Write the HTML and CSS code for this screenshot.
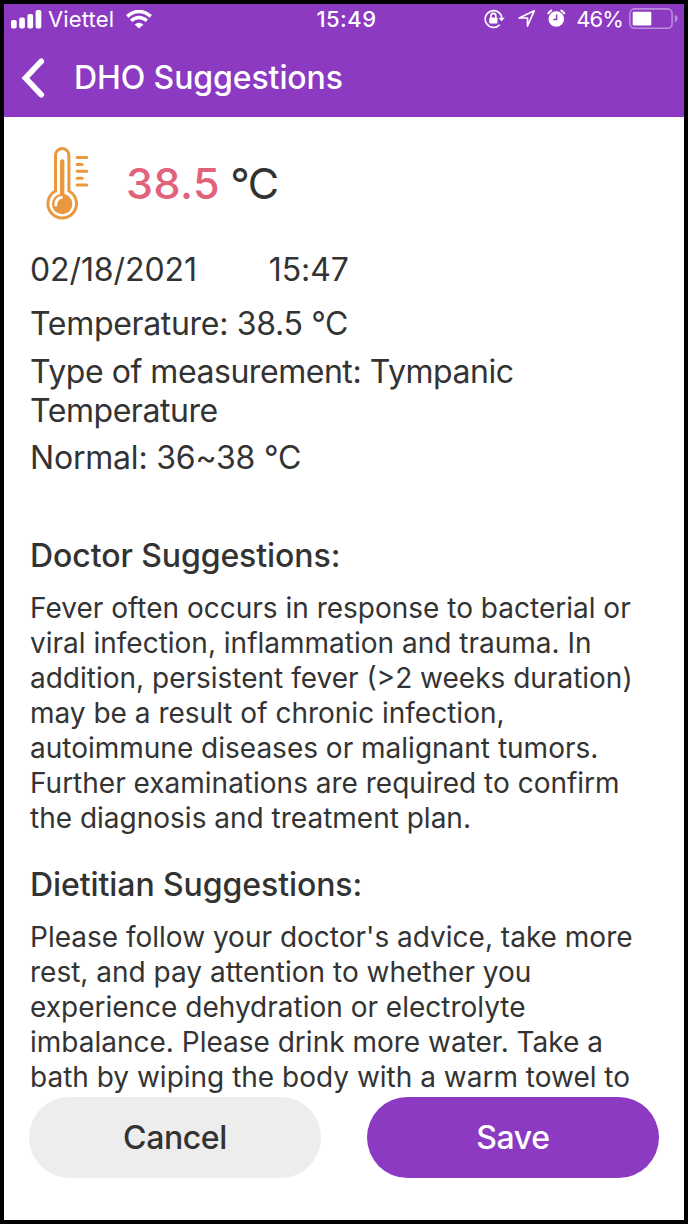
FILE: index.html
```html
<!DOCTYPE html>
<html lang="en">
<head>
  <meta charset="UTF-8">
  <title>DHO Suggestions</title>
  <link rel="stylesheet" href="styles.css">
</head>
<body>
  <div class="screen">
    <header>
      <!-- Status bar -->
      <div class="status">
        <div class="status-left">
          <svg class="signal" width="31" height="19" viewBox="0 0 31 19" fill="#fff">
            <rect x="0" y="10" width="5.7" height="8.5" rx="1.8"/>
            <rect x="8.2" y="7.5" width="5.7" height="11" rx="1.8"/>
            <rect x="16.4" y="4" width="5.7" height="14.5" rx="1.8"/>
            <rect x="24.6" y="0" width="5.7" height="18.5" rx="1.8"/>
          </svg>
          <span class="carrier">Viettel</span>
          <svg class="wifi" width="26" height="19" viewBox="0 0 26 19" fill="none" stroke="#fff">
            <path d="M1.2 6.4Q13-3.4 24.8 6.4" stroke-width="3.6"/>
            <path d="M5.1 10.8Q13 4.2 20.9 10.8" stroke-width="3.3"/>
            <path d="M8.6 14.5Q13 10.9 17.4 14.5L13 18.5Z" fill="#fff" stroke="none"/>
          </svg>
        </div>
        <span class="clock">15:49</span>
        <div class="status-right">
          <svg class="lock" width="22" height="20" viewBox="0 0 22 20" fill="none" stroke="#fff" stroke-width="1.6">
            <path d="M15.8 15.7A8.4 8.4 0 1 1 17.9 8.8"/>
            <path d="M14.4 8.8H20.8L17.6 12.2Z" fill="#fff" stroke="none"/>
            <rect x="5.3" y="8.5" width="8.2" height="6" rx="1" fill="#fff" stroke="none"/>
            <path d="M7 9V6.8a2.4 2.4 0 0 1 4.8 0V9"/>
          </svg>
          <svg class="location" width="18" height="19" viewBox="0 0 18 19" fill="none" stroke="#fff" stroke-width="1.7" stroke-linejoin="round">
            <path d="M1.2 9L16.2 1.8L9.5 17V9Z"/>
          </svg>
          <svg class="alarm" width="19" height="19" viewBox="0 0 19 19">
            <circle cx="9.3" cy="10" r="7.8" fill="#fff"/>
            <path d="M.9 5A9 9 0 0 1 5 1.2M13.6 1.2A9 9 0 0 1 17.7 5" fill="none" stroke="#fff" stroke-width="2"/>
            <path d="M9.6 5.4V10.6H6.3" fill="none" stroke="#8d3ac3" stroke-width="1.5"/>
          </svg>
          <span class="percent">46%</span>
          <svg class="battery" width="49" height="22" viewBox="0 0 49 22">
            <rect x=".9" y=".9" width="42.2" height="19.4" rx="4.5" fill="none" stroke="#bd8cde" stroke-width="1.6"/>
            <rect x="3.7" y="3.8" width="18.6" height="13.6" rx="1.2" fill="#fff"/>
            <path d="M45.8 7Q48.6 7.8 48.6 10.6T45.8 14.3Z" fill="#bd8cde"/>
          </svg>
        </div>
      </div>
      <div class="navbar">
        <svg class="back" width="24" height="40" viewBox="0 0 24 40" fill="none" stroke="#fff" stroke-width="5.6" stroke-linecap="round" stroke-linejoin="miter">
          <path d="M20.3 3.3L4.4 20L20.3 36.7"/>
        </svg>
        <h1>DHO Suggestions</h1>
      </div>
    </header>

    <main>
      <div class="reading">
        <svg class="thermometer" width="46" height="76" viewBox="0 0 46 76" fill="none" stroke="#ea983e">
          <path d="M10.5 46V10.2a6.7 6.7 0 0 1 13.4 0V46A14.3 14.3 0 1 1 10.5 46Z" stroke-width="3"/>
          <path d="M17.2 16.5V52" stroke-width="4.4" stroke-linecap="round"/>
          <circle cx="17.2" cy="59" r="10.2" fill="#ea983e" stroke="none"/>
          <path d="M10.8 60Q10.8 53.6 16.4 52.4" stroke="#fff" stroke-width="3" stroke-linecap="round"/>
          <path d="M32.1 12.5H41.7M32.1 19.4H37.2M32.1 26.3H41.7M32.1 33.2H37.2M32.1 39.9H41.7" stroke-width="3" stroke-linecap="round"/>
        </svg>
        <span class="value">38.5</span>
        <span class="unit">°C</span>
      </div>

      <div class="details">
        <div class="datetime"><span class="date">02/18/2021</span><span class="time">15:47</span></div>
        <p class="temp">Temperature: 38.5 °C</p>
        <p class="type">Type of measurement: Tympanic<br>Temperature</p>
        <p class="normal">Normal: 36~38 °C</p>
      </div>

      <section>
        <h2 class="doctor">Doctor Suggestions:</h2>
        <p>
          Fever often occurs in response to bacterial or<br>
          viral infection, inflammation and trauma. In<br>
          addition, persistent fever (&gt;2 weeks duration)<br>
          may be a result of chronic infection,<br>
          autoimmune diseases or malignant tumors.<br>
          Further examinations are required to confirm<br>
          the diagnosis and treatment plan.
        </p>
      </section>

      <section>
        <h2 class="dietitian">Dietitian Suggestions:</h2>
        <p>
          Please follow your doctor's advice, take more<br>
          rest, and pay attention to whether you<br>
          experience dehydration or electrolyte<br>
          imbalance. Please drink more water. Take a<br>
          bath by wiping the body with a warm towel to
        </p>
      </section>
    </main>

    <footer>
      <button class="cancel">Cancel</button>
      <button class="save">Save</button>
    </footer>
  </div>
</body>
</html>
```
FILE: styles.css
```css
* {
  box-sizing: border-box;
}
body {
  margin: 0;
  background: #000;
  font-family: Inter, "Liberation Sans", sans-serif;
  color: #333;
}
h1, h2, p {
  margin: 0;
  white-space: nowrap;
}
svg {
  display: block;
  flex-shrink: 0;
}
.screen {
  display: flex;
  flex-direction: column;
  width: 688px;
  height: 1224px;
  border: 4px solid #000;
  background: #fff;
  overflow: hidden;
}

/* Header */
header {
  height: 113px;
  flex-shrink: 0;
  background: #8d3ac3;
  color: #fff;
}
.status {
  display: grid;
  grid-template-columns: 1fr auto 1fr;
  align-items: center;
  height: 30px;
  padding: 0 6px 0 7px;
  font-size: 22px;
}
.status-left,
.status-right {
  display: flex;
  align-items: center;
}
.status-right {
  justify-content: flex-end;
}
.carrier {
  margin: 0 12px 0 6px;
  letter-spacing: 0.15px;
}
.clock {
  padding-left: 4px;
  font-weight: 500;
  letter-spacing: 0.5px;
}
.lock,
.location,
.alarm {
  margin-bottom: 1px;
}
.location {
  margin-right: 11px;
  margin-left: 12px;
}
.percent {
  margin: 0 6px 0 10px;
  letter-spacing: -0.9px;
}
.navbar {
  display: flex;
  align-items: center;
  height: 87px;
  padding: 0 0 0 17px;
}
h1 {
  margin-left: 29px;
  font-size: 32px;
  font-weight: 500;
  letter-spacing: -0.1px;
}

/* Measurement */
main {
  flex: 1;
  min-height: 0;
  padding: 28px 26px 0;
  overflow: hidden;
}
.reading {
  display: flex;
  align-items: center;
  height: 76px;
  padding-left: 15px;
}
.value {
  margin-left: 35px;
  font-size: 43px;
  font-weight: 500;
  letter-spacing: 0.5px;
  color: #e2627b;
}
.unit {
  margin-left: 10px;
  font-size: 43px;
  letter-spacing: -1.5px;
}
.details {
  padding-top: 29px;
  font-size: 32px;
  line-height: 39px;
}
.datetime {
  letter-spacing: -0.1px;
}
.time {
  margin-left: 72px;
}
.temp {
  padding-top: 15px;
  letter-spacing: -0.32px;
}
.type {
  padding-top: 10px;
  letter-spacing: -0.45px;
  line-height: 38.5px;
}
.normal {
  padding-top: 8px;
  letter-spacing: -0.2px;
}

/* Suggestions */
h2 {
  font-size: 32px;
  font-weight: 500;
  line-height: 39px;
  letter-spacing: -0.08px;
}
.doctor {
  margin: 59px 0 16px;
}
.dietitian {
  margin: 29px 0 16px;
}
section p {
  font-size: 28px;
  line-height: 35px;
}

/* Buttons */
footer {
  display: flex;
  justify-content: space-between;
  flex-shrink: 0;
  height: 123px;
  padding: 0 25px;
}
button {
  width: 292px;
  height: 81px;
  border: 0;
  border-radius: 41px;
  font-family: inherit;
  font-size: 32px;
  font-weight: 500;
  letter-spacing: -0.4px;
}
.cancel {
  background: #ededed;
  color: #333;
}
.save {
  background: #8d3ac3;
  color: #fff;
}
```
